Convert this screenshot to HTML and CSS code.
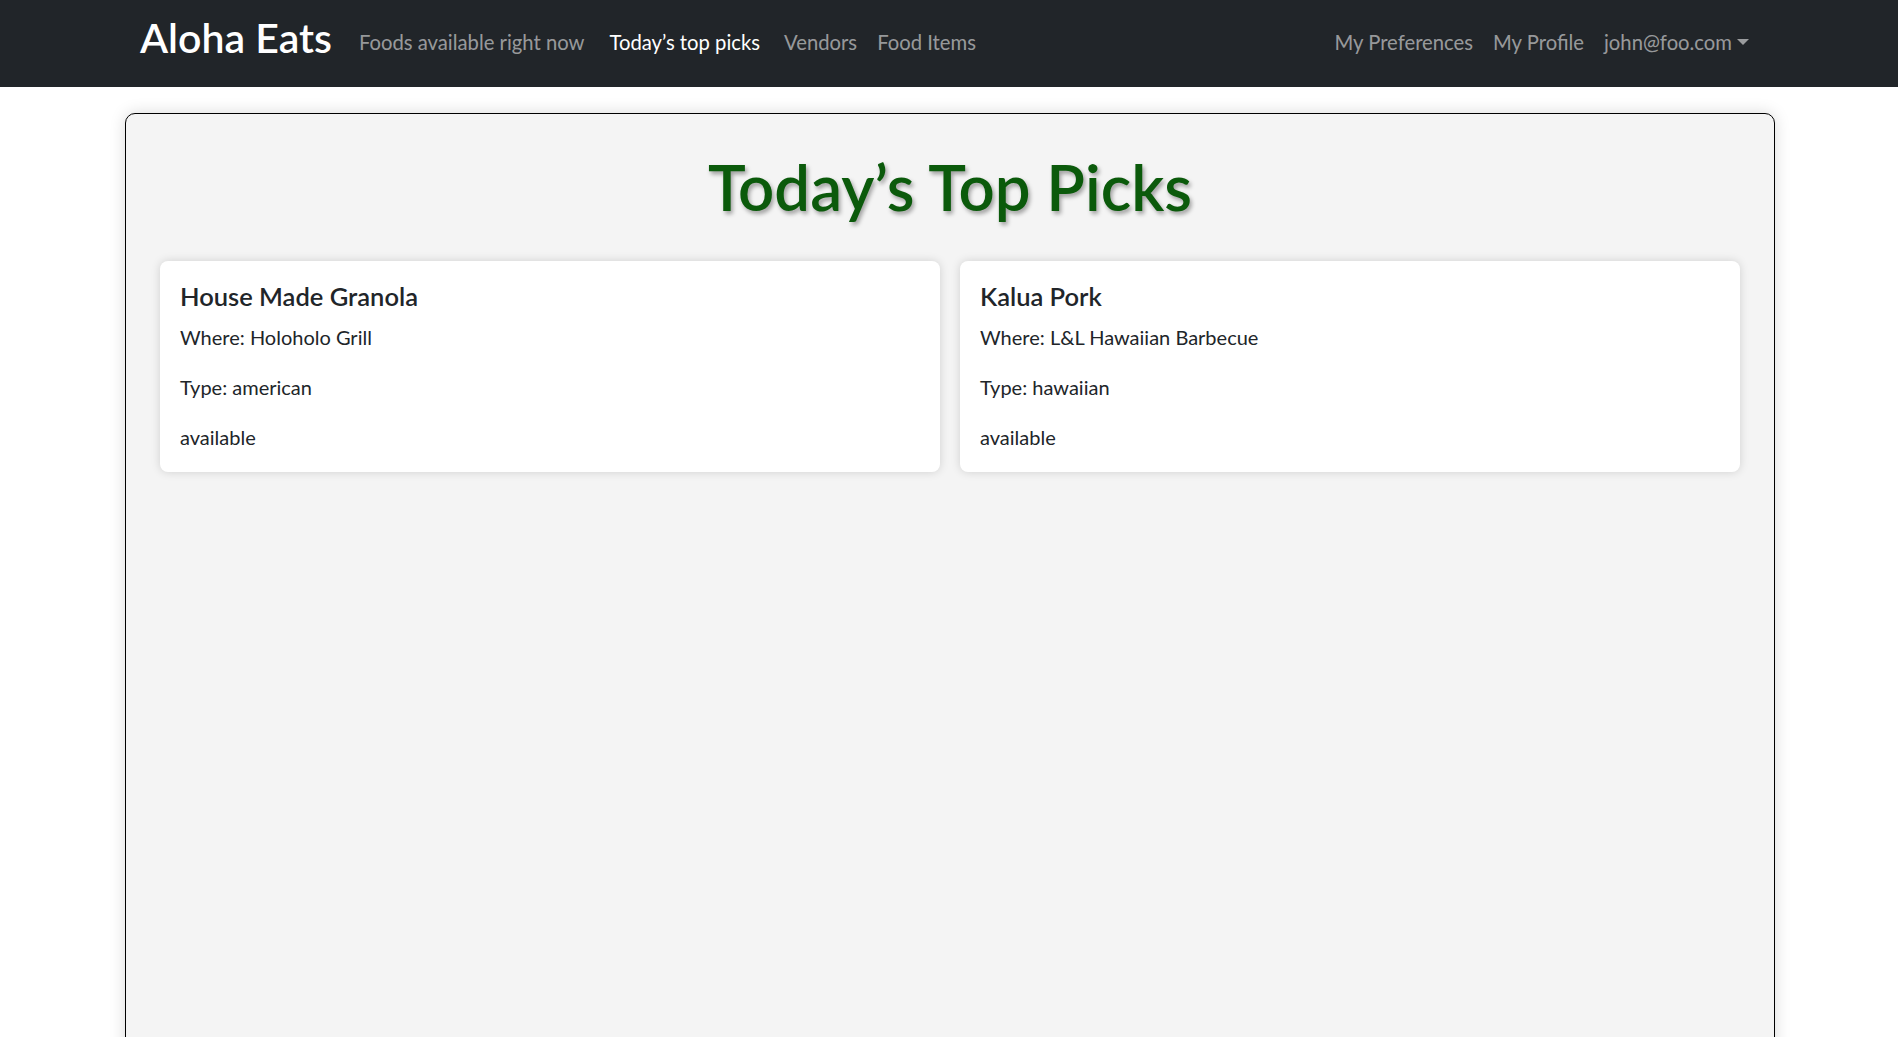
FILE: index.html
```html
<!DOCTYPE html>
<html lang="en">
<head>
<meta charset="utf-8">
<title>Aloha Eats</title>
<link rel="stylesheet" href="styles.css">
</head>
<body>
<nav class="navbar">
  <div class="nav-inner">
    <a class="brand" href="#">Aloha Eats</a>
    <ul class="nav-list">
      <li><a class="nav-link" href="#">Foods available right now</a></li>
      <li><a class="nav-link active" href="#">Today’s top picks</a></li>
      <li><a class="nav-link" href="#">Vendors</a></li>
      <li><a class="nav-link" href="#">Food Items</a></li>
    </ul>
    <ul class="nav-list nav-right">
      <li><a class="nav-link" href="#">My Preferences</a></li>
      <li><a class="nav-link" href="#">My Profile</a></li>
      <li><a class="nav-link dropdown" href="#">john@foo.com<span class="caret"></span></a></li>
    </ul>
  </div>
</nav>
<main class="page">
  <section class="panel">
    <h1 class="panel-title">Today’s Top Picks</h1>
    <div class="card-row">
      <div class="card">
        <h5 class="card-title">House Made Granola</h5>
        <p class="card-text">Where: Holoholo Grill</p>
        <p class="card-text">Type: american</p>
        <p class="card-text">available</p>
      </div>
      <div class="card">
        <h5 class="card-title">Kalua Pork</h5>
        <p class="card-text">Where: L&amp;L Hawaiian Barbecue</p>
        <p class="card-text">Type: hawaiian</p>
        <p class="card-text">available</p>
      </div>
    </div>
  </section>
</main>
</body>
</html>
```
FILE: styles.css
```css
* { box-sizing: border-box; }
html, body { margin: 0; padding: 0; }
body {
  font-family: "Lato", "Open Sans", sans-serif;
  font-size: 20px;
  line-height: 1.5;
  color: #212529;
  background: #fff;
  overflow: hidden;
}
.navbar {
  background: #212529;
  height: 87px;
}
.nav-inner {
  width: 1650px;
  margin: 0 auto;
  padding: 0 15px 4px 16px;
  height: 100%;
  display: flex;
  align-items: center;
}
.brand {
  color: #fff;
  text-decoration: none;
  font-size: 41px;
  font-weight: 600;
  line-height: 1;
  margin-right: 17px;
  padding-bottom: 8px;
}
.nav-list {
  list-style: none;
  margin: 0;
  padding: 0;
  display: flex;
}
.nav-right { margin-left: auto; }
.nav-link {
  display: block;
  padding: 0 10px;
  font-size: 20.25px;
  color: rgba(255,255,255,.55);
  text-decoration: none;
  line-height: 30px;
}
.nav-link.active {
  color: #fff;
  padding: 0 14px 0 15px;
}
.caret {
  display: inline-block;
  margin-left: 5px;
  vertical-align: 5px;
  border-top: 6px solid;
  border-left: 6px solid transparent;
  border-right: 6px solid transparent;
}
.page {
  padding-top: 26px;
}
.panel {
  width: 1650px;
  margin: 0 auto;
  min-height: 1100px;
  background: #f4f4f4;
  border: 1px solid #000;
  border-radius: 10px;
  box-shadow: 0 0 16px rgba(0,0,0,.15);
  padding: 35px 34px 36px 34px;
  transform: translateX(1px);
}
.panel-title {
  margin: 0 0 36px;
  text-align: center;
  font-size: 63.5px;
  font-weight: 600;
  line-height: 1.2;
  color: #0b5a0b;
  text-shadow: 2px 3px 4px rgba(0,0,0,.35);
}
.card-row {
  display: grid;
  grid-template-columns: 1fr 1fr;
  gap: 20px;
}
.card {
  background: #fff;
  border-radius: 8px;
  box-shadow: 0 0 10px rgba(0,0,0,.15);
  padding: 20px;
}
.card-title {
  margin: 0 0 10px;
  font-size: 25.5px;
  font-weight: 600;
  line-height: 1.2;
}
.card-text {
  margin: 0 0 20px;
}
.card-text:last-child { margin-bottom: 0; }
```
